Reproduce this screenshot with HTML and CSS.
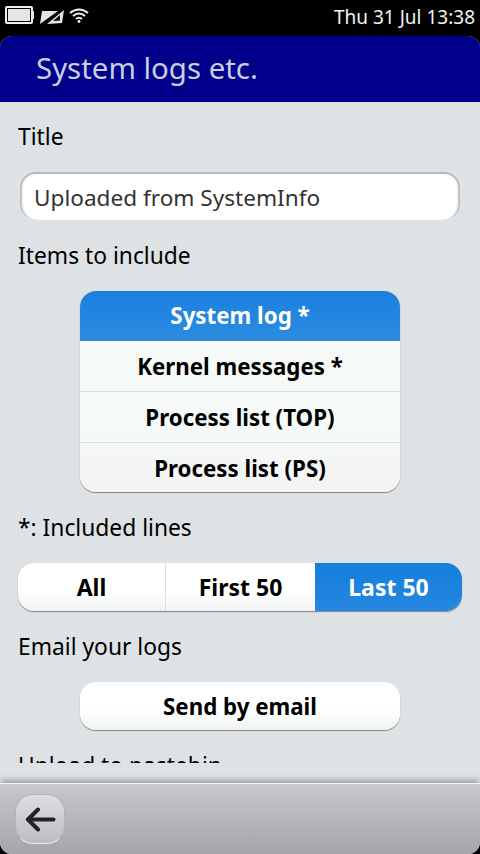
FILE: index.html
```html
<!DOCTYPE html>
<html lang="en">
<head>
    <meta charset="UTF-8">
    <meta name="viewport" content="width=device-width, initial-scale=1.0">
    <title>System logs etc.</title>
    <link rel="stylesheet" href="styles.css">
</head>

<body>
    <div class="phone">
        <div class="status-bar">
            <svg class="status-icons" width="92" height="36" viewBox="0 0 92 36">
                <!-- battery -->
                <rect x="6" y="7" width="26" height="16" rx="1" fill="none" stroke="#f0eef0" stroke-width="2"/>
                <rect x="8" y="9" width="22" height="12" fill="#e8e4e8"/>
                <rect x="32" y="11" width="2" height="8" fill="#e8e4e8"/>
                <!-- envelope, crossed out -->
                <path d="M42 11 L58 11 L40 24 Z" fill="#e8e4e8"/>
                <path d="M64 10 L62 23 L47 24 Z" fill="#e8e4e8"/>
                <path d="M60 15 L60 20.5 L53 21 Z" fill="#000000"/>
                <!-- wifi -->
                <g fill="none" stroke="#f0f0f0" stroke-width="2">
                    <path d="M70 13 Q79 6 88 13"/>
                    <path d="M73 16 Q79 11 85 16"/>
                    <path d="M76 19 Q79 16.5 82 19"/>
                </g>
                <circle cx="79" cy="21.5" r="1.4" fill="#f0f0f0"/>
            </svg>
            <div class="clock">Thu 31 Jul 13:38</div>
        </div>

        <div class="screen">
            <div class="header">System logs etc.</div>

            <div class="content">
                <div class="label first-label">Title</div>
                <div class="text-field">Uploaded from SystemInfo</div>

                <div class="label">Items to include</div>
                <div class="list-group">
                    <div class="list-item selected">System log *</div>
                    <div class="list-item">Kernel messages *</div>
                    <div class="list-item">Process list (TOP)</div>
                    <div class="list-item last">Process list (PS)</div>
                </div>

                <div class="label">*: Included lines</div>
                <div class="segments">
                    <div class="segment first">All</div>
                    <div class="segment middle">First 50</div>
                    <div class="segment active">Last 50</div>
                </div>

                <div class="label">Email your logs</div>
                <div class="push-button">Send by email</div>

                <div class="label">Upload to pastebin</div>
            </div>

            <div class="toolbar">
                <div class="back-btn">
                    <svg width="31" height="25" viewBox="0 0 31 25" fill="none" stroke="#222226" stroke-width="4" stroke-linecap="round" stroke-linejoin="round">
                        <path d="M28.5 12.5 H3"/>
                        <path d="M13 2.5 L3 12.5 L13 22.5"/>
                    </svg>
                </div>
            </div>
        </div>
    </div>
</body>
</html>
```

FILE: styles.css
```css
/* Harmattan style settings page */
body {
    margin: 0;
    background-color: #000000;
    font-family: "Noto Sans", "Open Sans", sans-serif;
}

.phone {
    width: 480px;
    height: 854px;
    display: flex;
    flex-direction: column;
    overflow: hidden;
}

.status-bar {
    height: 36px;
    flex-shrink: 0;
    display: flex;
    justify-content: space-between;
    align-items: center;
    background-color: #000000;
    color: #f2f2f2;
    font-size: 19px;
    padding-right: 5px;
}

.clock {
    margin-top: -2px;
    white-space: nowrap;
}

.screen {
    flex: 1;
    min-height: 0;
    display: flex;
    flex-direction: column;
    background-color: #dfe2e5;
    border-radius: 12px;
    overflow: hidden;
}

.header {
    height: 66px;
    flex-shrink: 0;
    box-sizing: border-box;
    padding-left: 36px;
    line-height: 64px;
    background-color: #00008b;
    color: #c9cfe0;
    font-size: 29.4px;
}

.content {
    flex: 1;
    min-height: 0;
    overflow: hidden;
    margin-bottom: 20px;
    padding: 0 18px;
    display: flex;
    flex-direction: column;
    align-items: stretch;
}

.label {
    height: 71px;
    flex-shrink: 0;
    display: flex;
    align-items: center;
    font-size: 22.8px;
    color: #000000;
}

.first-label {
    height: 70px;
    padding-bottom: 2px;
    box-sizing: border-box;
}

.text-field {
    height: 48px;
    flex-shrink: 0;
    box-sizing: border-box;
    margin: 0 2px;
    padding-left: 14px;
    line-height: 52px;
    font-size: 22.6px;
    color: #333333;
    background-color: #ffffff;
    border-radius: 16px;
    box-shadow: inset 0 2px 1px #b4b6b9, inset 3px 0 2px -1px #b8babd, inset -3px 0 2px -1px #b8babd;
}

.list-group {
    width: 320px;
    flex-shrink: 0;
    align-self: center;
    border-radius: 16px;
    overflow: hidden;
    box-shadow: 0 1px 1px #808284;
    background: linear-gradient(#f6faf7, #f5f9f7 70%, #f3f3f3);
}

.list-item {
    height: 50px;
    line-height: 52px;
    text-align: center;
    font-size: 22.3px;
    font-weight: 700;
    color: #000000;
    border-bottom: 1px solid #dcdfe0;
}

.list-item.selected {
    height: 50px;
    line-height: 50px;
    background: linear-gradient(#1a80de, #2c8ce0);
    color: #ffffff;
    border-bottom: none;
}

.list-item.last {
    height: 49px;
    border-bottom: none;
}

.segments {
    height: 48px;
    flex-shrink: 0;
    display: flex;
    border-radius: 16px;
    overflow: hidden;
    box-shadow: 0 1px 1px #808284;
    background: linear-gradient(#ffffff 55%, #f1f3f3);
}

.segment {
    line-height: 48px;
    text-align: center;
    font-size: 23px;
    font-weight: 700;
    color: #000000;
}

.segment.first {
    width: 147px;
}

.segment.middle {
    flex: 1;
    border-left: 1px solid #dcdfe0;
}

.segment.active {
    width: 147px;
    background: linear-gradient(#157edd, #2587e0);
    color: #ffffff;
}

.push-button {
    width: 320px;
    height: 48px;
    flex-shrink: 0;
    align-self: center;
    line-height: 50px;
    text-align: center;
    font-size: 22.3px;
    font-weight: 700;
    color: #000000;
    border-radius: 16px;
    box-shadow: 0 1px 1px #808284;
    background: linear-gradient(#ffffff 55%, #f1f3f3);
}

.toolbar {
    height: 71px;
    flex-shrink: 0;
    display: flex;
    align-items: center;
    box-sizing: border-box;
    padding-left: 15px;
    border-top: 1px solid #f4f4f4;
    background: linear-gradient(#c9c8cc, #a5a4aa);
    box-shadow: 0 -5px 5px -1px #a9abad;
}

.back-btn {
    width: 48px;
    height: 48px;
    display: flex;
    justify-content: center;
    align-items: center;
    border-radius: 18px;
    border: 1px solid #b4b3b8;
    border-bottom-color: #ecebed;
    background: linear-gradient(#dfdde0, #bdbcc1);
}
```
